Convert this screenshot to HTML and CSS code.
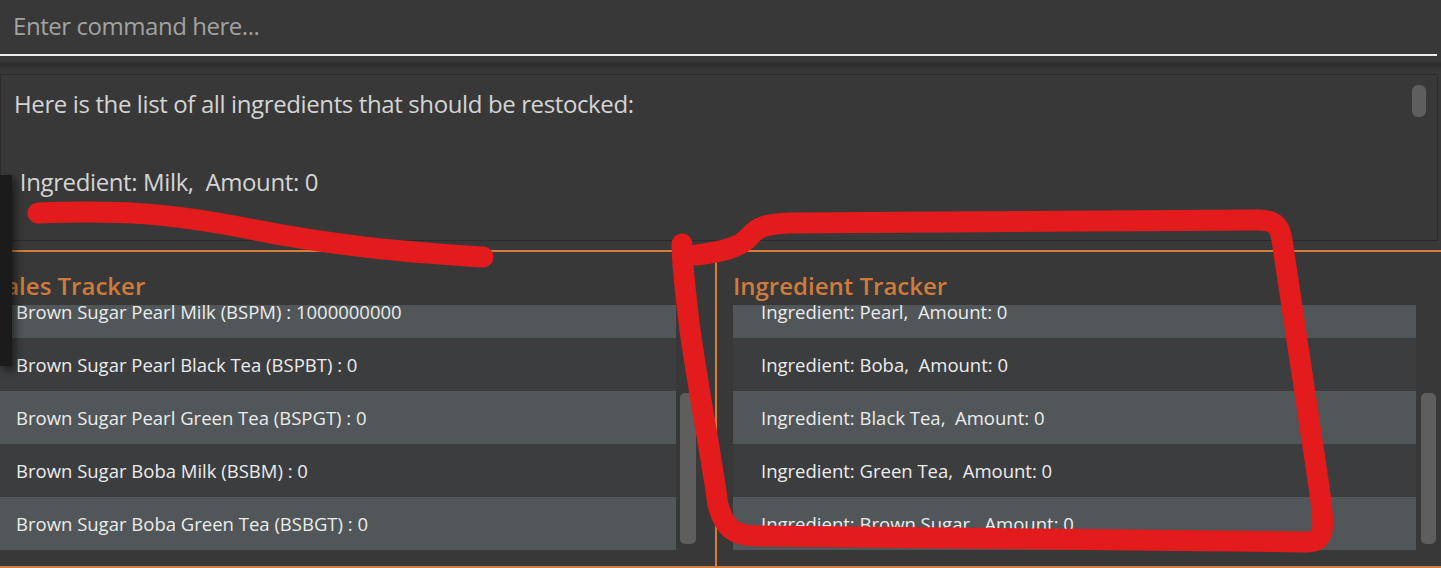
FILE: index.html
```html
<!DOCTYPE html>
<html lang="en">
<head>
<meta charset="utf-8">
<title>Tracker</title>
<link rel="stylesheet" href="styles.css">
</head>
<body>
<div class="app">
  <div class="command"><span class="placeholder">Enter command here...</span></div>
  <div class="sep"></div>
  <div class="result">
    <div class="result-text">Here is the list of all ingredients that should be restocked:

 Ingredient: Milk,  Amount: 0</div>
    <div class="result-track"><div class="result-thumb"></div></div>
  </div>
  <div class="trackers">
    <section class="panel panel-sales">
      <div class="panel-inner">
        <h2 class="panel-title">Sales Tracker</h2>
        <div class="listwrap">
          <div class="list">
            <div class="rows">
              <div class="row row-light">Brown Sugar Pearl Milk (BSPM) : 1000000000</div>
              <div class="row row-dark">Brown Sugar Pearl Black Tea (BSPBT) : 0</div>
              <div class="row row-light">Brown Sugar Pearl Green Tea (BSPGT) : 0</div>
              <div class="row row-dark">Brown Sugar Boba Milk (BSBM) : 0</div>
              <div class="row row-light">Brown Sugar Boba Green Tea (BSBGT) : 0</div>
              <div class="row row-dark">Brown Sugar Boba Black Tea (BSBBT) : 0</div>
            </div>
          </div>
          <div class="track"><div class="thumb"></div></div>
        </div>
      </div>
    </section>
    <section class="panel panel-ing">
      <div class="panel-inner">
        <h2 class="panel-title">Ingredient Tracker</h2>
        <div class="listwrap">
          <div class="list">
            <div class="rows">
              <div class="row row-light">Ingredient: Pearl,  Amount: 0</div>
              <div class="row row-dark">Ingredient: Boba,  Amount: 0</div>
              <div class="row row-light">Ingredient: Black Tea,  Amount: 0</div>
              <div class="row row-dark">Ingredient: Green Tea,  Amount: 0</div>
              <div class="row row-light">Ingredient: Brown Sugar,  Amount: 0</div>
              <div class="row row-dark">Ingredient: Milk,  Amount: 0</div>
            </div>
          </div>
          <div class="track"><div class="thumb"></div></div>
        </div>
      </div>
    </section>
  </div>
  <div class="side-window"></div>
  <svg class="annot" width="1441" height="568" viewBox="0 0 1441 568">
    <path d="M38 213 C 120 210, 170 213, 250 229 S 400 252, 483 257" />
    <path d="M697 255 C 720 252, 740 248, 750 236 C 758 227, 765 224, 790 223 L 1258 220 C 1275 220, 1280 226, 1282 240 L 1303 380 L 1318 480 C 1324 522, 1328 542, 1307 542 L 760 536 C 735 536, 725 530, 718 505 C 712 460, 700 400, 690 330 C 685 290, 682 260, 682 244" />
  </svg>
</div>
</body>
</html>
```

FILE: styles.css
```css
html, body {
  margin: 0;
  padding: 0;
  background: #383838;
  overflow: hidden;
}

.app {
  position: relative;
  width: 1441px;
  height: 568px;
  overflow: hidden;
  background: #383838;
  font-family: "Open Sans", "Liberation Sans", sans-serif;
  display: flex;
  flex-direction: column;
}

.command {
  box-sizing: border-box;
  padding: 9px 0 0 13px;
  width: 1437px;
  border-bottom: 2px solid #ececec;
  flex: none;
  height: 56px;
}

.placeholder {
  font-size: 24px;
  letter-spacing: -0.45px;
  line-height: 34px;
  color: #a2a2a2;
  display: block;
}

.sep {
  flex: none;
  height: 18px;
  background: linear-gradient(to bottom, #383838 0, #383838 5px, #2e2e2e 7px, #2c2c2c 9px, #353535 12px, #383838 14px, #383838 100%);
}

.result {
  flex: none;
  width: 1438px;
  height: 167px;
  box-sizing: border-box;
  border: 1px solid #2c2c2c;
  background: #383838;
  display: flex;
}

.result-text {
  flex: 1;
  white-space: pre;
  font-size: 24px;
  letter-spacing: -0.38px;
  line-height: 39px;
  color: #d4d4d4;
  padding: 9px 0 0 13px;
}

.result-track {
  width: 20px;
  flex: none;
  padding-top: 10px;
  padding-right: 5px;
}

.result-thumb {
  width: 14px;
  height: 32px;
  border-radius: 6px;
  background: #5e5e5e;
}

.trackers {
  flex: none;
  margin-top: 9px;
  height: 318px;
  box-sizing: border-box;
  border-top: 2px solid #d27d3c;
  border-bottom: 2px solid #d27d3c;
  display: flex;
}

.panel {
  overflow: hidden;
  height: 100%;
}

.panel-sales {
  width: 715px;
  flex: none;
}

.panel-ing {
  flex: 1;
  border-left: 2px solid #d27d3c;
  padding-left: 16px;
  padding-right: 5px;
}

.panel-sales .panel-inner {
  margin-left: -12px;
  margin-right: 19px;
}

.panel-title {
  margin: 0;
  height: 53px;
  box-sizing: border-box;
  padding-top: 17px;
  font-size: 24px;
  line-height: 34px;
  font-weight: 600;
  color: #cf7b3c;
  white-space: nowrap;
}

.panel-sales .panel-title {
  padding-left: 4px;
}

.listwrap {
  display: flex;
  height: 245px;
  gap: 4px;
}

.panel-ing .listwrap {
  gap: 5px;
}

.list {
  flex: 1;
  overflow: hidden;
}

.rows {
  margin-top: -20px;
}

.row {
  height: 53px;
  line-height: 53px;
  padding-left: 28px;
  font-size: 18.5px;
  color: #ececec;
  white-space: pre;
}

.row-light {
  background: #515658;
}

.row-dark {
  background: #3c3d3f;
}

.track {
  width: 16px;
  flex: none;
}

.panel-ing .track {
  width: 15px;
}

.thumb {
  margin-top: 88px;
  height: 151px;
  border-radius: 5px;
  background: #5e5e5e;
}

.side-window {
  position: absolute;
  left: 0;
  top: 175px;
  width: 12px;
  height: 191px;
  background: #1b1b1b;
  box-shadow: 3px 4px 8px rgba(0, 0, 0, 0.55);
}

.annot {
  position: absolute;
  left: 0;
  top: 0;
  pointer-events: none;
}

.annot path {
  fill: none;
  stroke: #e31b1c;
  stroke-width: 21;
  stroke-linecap: round;
  stroke-linejoin: round;
}
```
